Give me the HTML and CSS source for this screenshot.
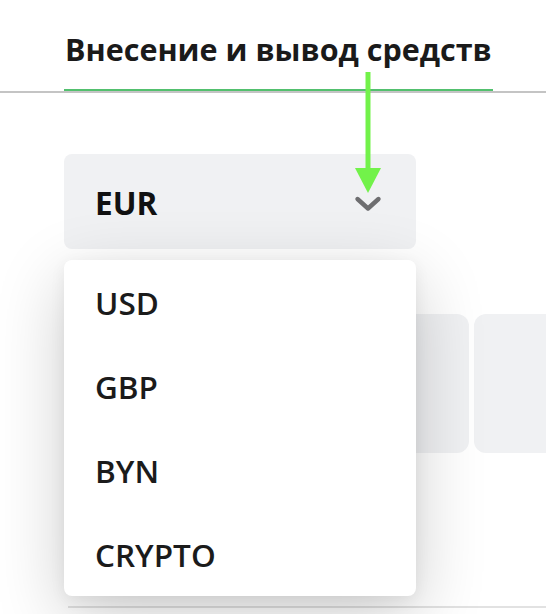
FILE: index.html
```html
<!DOCTYPE html>
<html lang="ru">
<head>
<meta charset="utf-8">
<title>Внесение и вывод средств</title>
<link rel="stylesheet" href="styles.css">
</head>
<body>
<div class="page">
  <div class="tabs">
    <div class="tab tab-active">Внесение и вывод средств</div>
  </div>
  <div class="content">
    <div class="select-wrap">
      <div class="select">
        <span class="select-value">EUR</span>
        <svg class="chevron" width="28" height="18" viewBox="0 0 28 18"><path d="M3.5 4 L14 13.5 L24.5 4" fill="none" stroke="#6e6e70" stroke-width="4.4" stroke-linecap="round" stroke-linejoin="round"/></svg>
      </div>
      <ul class="menu">
        <li class="menu-item">USD</li>
        <li class="menu-item">GBP</li>
        <li class="menu-item">BYN</li>
        <li class="menu-item">CRYPTO</li>
      </ul>
    </div>
    <div class="cards">
      <div class="card"></div>
      <div class="card"></div>
    </div>
    <div class="divider"></div>
  </div>
  <svg class="arrow" width="40" height="130" viewBox="0 0 40 130"><line x1="18" y1="2" x2="18" y2="100" stroke="#72f24a" stroke-width="5"/><polygon points="5,98 31,98 18,123" fill="#72f24a"/></svg>
</div>
</body>
</html>
```
FILE: styles.css
```css
html, body {
  margin: 0;
  padding: 0;
  background: #ffffff;
}
body {
  font-family: "Open Sans", "Noto Sans", sans-serif;
  color: #1b1b1b;
}
.page {
  position: relative;
  width: 546px;
  height: 614px;
  overflow: hidden;
}
.tabs {
  padding-left: 64px;
  padding-top: 29px;
  border-bottom: 2px solid #c4c4c4;
  display: flex;
}
.tab {
  font-size: 30.5px;
  line-height: 40px;
  font-weight: 700;
  white-space: nowrap;
  padding-bottom: 20px;
  padding-left: 1px;
  padding-right: 1px;
  border-bottom: 2px solid #52c06e;
  color: #1a1a1a;
}
.content {
  padding-left: 64px;
}
.select-wrap {
  position: relative;
  width: 352px;
  margin-top: 61px;
}
.select {
  height: 95px;
  box-sizing: border-box;
  background: #f0f1f3;
  border-radius: 8px;
  display: flex;
  align-items: center;
  justify-content: space-between;
  padding: 2px 34px 0 31px;
}
.select-value {
  font-size: 31.5px;
  font-weight: 700;
  color: #111;
}
.chevron {
  display: block;
  margin-top: 2px;
}
.menu {
  position: absolute;
  left: 0;
  top: 106px;
  width: 352px;
  margin: 0;
  padding: 0;
  list-style: none;
  background: #fff;
  border-radius: 8px;
  box-shadow: 0 20px 70px rgba(0, 0, 0, 0.2), 0 4px 16px rgba(0, 0, 0, 0.06);
  z-index: 2;
}
.menu-item {
  height: 84px;
  display: flex;
  align-items: center;
  padding-left: 31px;
  font-size: 31.5px;
  font-weight: 600;
  color: #1b1b1b;
}
.cards {
  display: flex;
  gap: 5px;
  margin-top: 65px;
}
.card {
  flex: 0 0 405px;
  height: 139px;
  background: #f0f1f3;
  border-radius: 12px;
}
.divider {
  margin-top: 153px;
  margin-left: 4px;
  height: 2px;
  background: #e2e2e2;
}
.arrow {
  position: absolute;
  left: 350px;
  top: 70px;
  z-index: 3;
}
```
